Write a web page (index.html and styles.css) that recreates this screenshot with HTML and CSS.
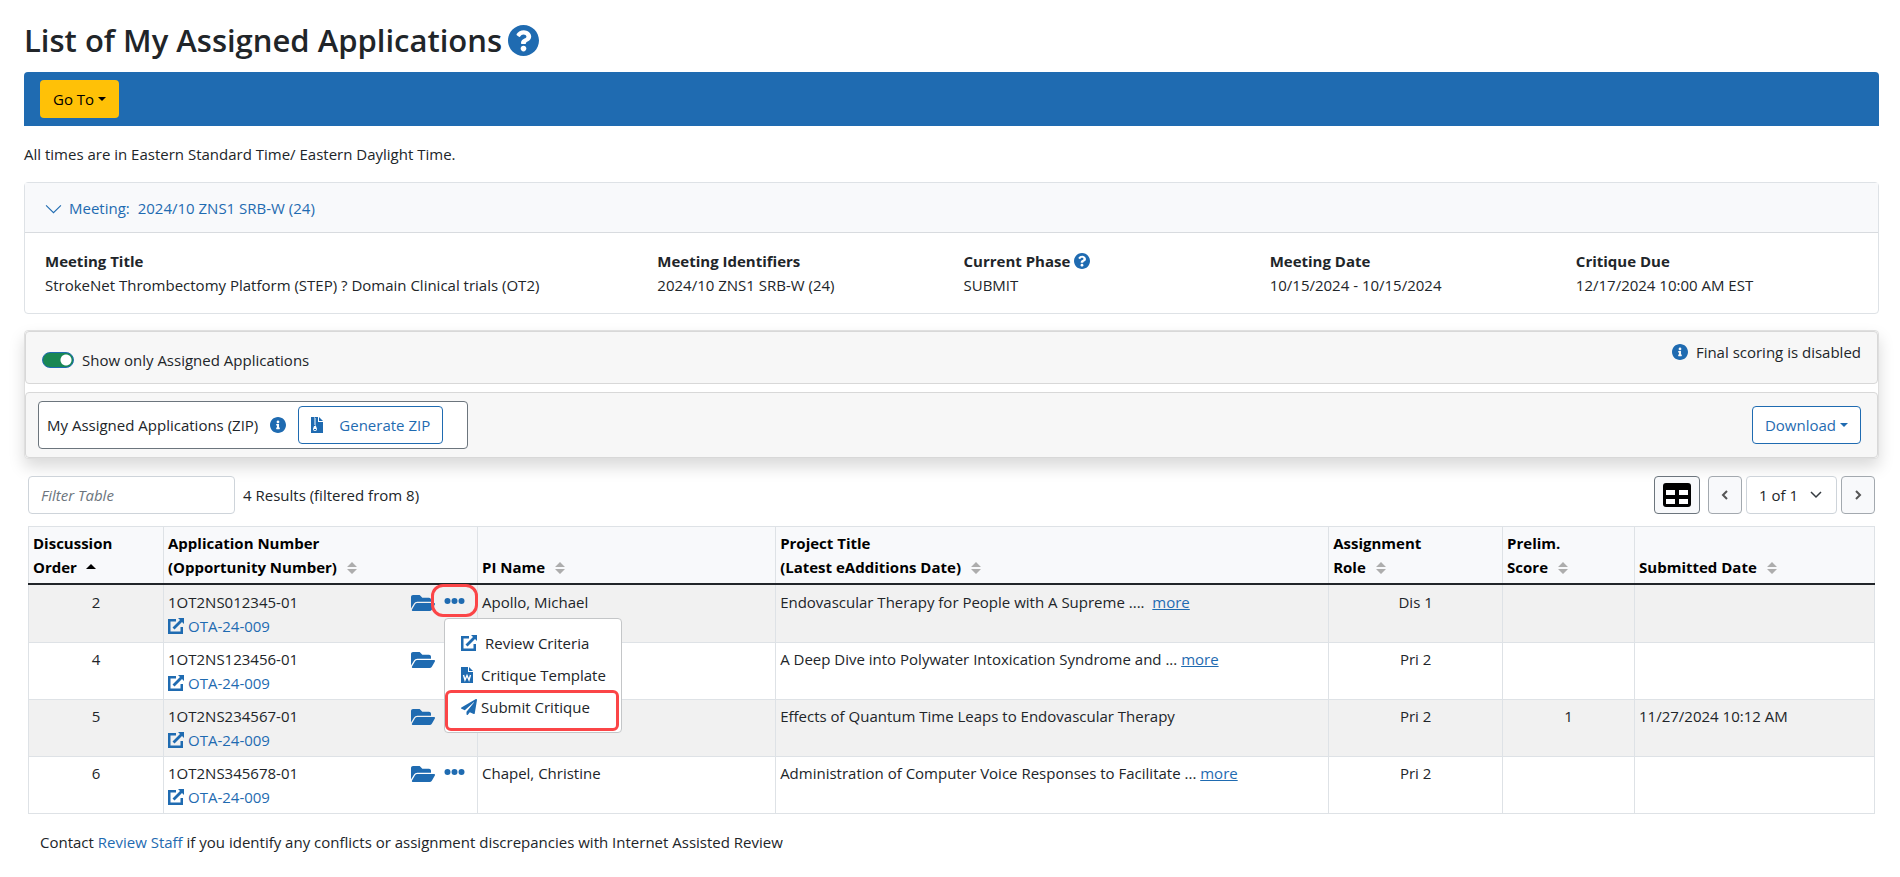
FILE: index.html
```html
<!DOCTYPE html>
<html lang="en">
<head>
    <meta charset="UTF-8">
    <meta name="viewport" content="width=device-width, initial-scale=1.0">
    <title>List of My Assigned Applications</title>
    <link rel="stylesheet" href="styles.css">
</head>
<body>
    <!-- icons shared by the page -->
    <svg class="sprite" aria-hidden="true">
        <symbol id="question" viewBox="8 8 496 496"><path d="M504 256c0 136.997-111.043 248-248 248S8 392.997 8 256C8 119.083 119.043 8 256 8s248 111.083 248 248zM262.655 90c-54.497 0-89.255 22.957-116.549 63.758-3.536 5.286-2.353 12.415 2.715 16.258l34.699 26.31c5.205 3.947 12.621 3.008 16.665-2.122 17.864-22.658 30.113-35.797 57.303-35.797 20.429 0 45.698 13.148 45.698 32.958 0 14.976-12.363 22.667-32.534 33.976C247.128 238.528 216 254.941 216 296v4c0 6.627 5.373 12 12 12h56c6.627 0 12-5.373 12-12v-1.333c0-28.462 83.186-29.647 83.186-106.667 0-58.002-60.165-102-116.531-102zM256 338c-25.365 0-46 20.635-46 46 0 25.364 20.635 46 46 46s46-20.636 46-46c0-25.365-20.635-46-46-46z"/></symbol>
        <symbol id="info" viewBox="8 8 496 496"><path d="M256 8C119.043 8 8 119.083 8 256c0 136.997 111.043 248 248 248s248-111.003 248-248C504 119.083 392.957 8 256 8zm0 110c23.196 0 42 18.804 42 42s-18.804 42-42 42-42-18.804-42-42 18.804-42 42-42zm56 254c0 6.627-5.373 12-12 12h-88c-6.627 0-12-5.373-12-12v-24c0-6.627 5.373-12 12-12h12v-64h-12c-6.627 0-12-5.373-12-12v-24c0-6.627 5.373-12 12-12h64c6.627 0 12 5.373 12 12v100h12c6.627 0 12 5.373 12 12v24z"/></symbol>
        <symbol id="folder" viewBox="0 64 576 384"><path d="M572.694 292.093L500.27 416.248A63.997 63.997 0 0 1 444.989 448H45.025c-18.523 0-30.064-20.093-20.731-36.093l72.424-124.155A64 64 0 0 1 152 256h399.964c18.523 0 30.064 20.093 20.73 36.093zM152 224h328v-48c0-26.51-21.49-48-48-48H272l-64-64H48C21.49 64 0 85.49 0 112v278.046l69.077-118.418C86.214 242.25 117.989 224 152 224z"/></symbol>
        <symbol id="plane" viewBox="0 0 512 512"><path d="M476 3.2L12.5 270.6c-18.1 10.4-15.8 35.6 2.2 43.2L121 358.4l287.3-253.2c5.5-4.9 13.3 2.6 8.6 8.3L176 407v80.5c0 23.6 28.5 32.9 42.5 15.8L282 426l124.6 52.2c14.2 6 30.4-2.9 33-18.2l72-432C515 7.8 493.3-6.8 476 3.2z"/></symbol>
        <symbol id="external" viewBox="0 0 16 16"><path d="M8 1v2.500H2.500v10h10V9H15v7H0V1zM10 0h6v6l-2-2-7.500 7.500-2-2L12 2z"/></symbol>
        <symbol id="dots" viewBox="0 0 20 6"><circle cx="3" cy="3" r="3"/><circle cx="10" cy="3" r="3"/><circle cx="17" cy="3" r="3"/></symbol>
        <symbol id="word" viewBox="0 0 12 16"><path d="M0 0h7v5h5v11H0zM8 0l4 4H8z"/><path d="M2.500 8l1.500 5 2-4.500 2 4.500 1.500-5" fill="none" stroke="#fff" stroke-width="1.400"/></symbol>
        <symbol id="zip" viewBox="0 0 12 16"><path d="M0 0h7v5h5v11H0zM8 0l4 4H8z"/><path d="M3 1h1M4 2h1M3 3h1M4 4h1M3 5h1M4 6h1M3 7h1M4 8h1" stroke="#fff" stroke-width="1"/><path d="M3 9h2l1 3a2 2 0 0 1-4 0z" fill="#fff"/><path d="M3 12h2v1H3z"/></symbol>
        <symbol id="sort" viewBox="0 0 10 12"><path d="M5 0l5 5H0zM0 7h10l-5 5z"/></symbol>
        <symbol id="left" viewBox="0 0 8 10"><path d="M6 1L2 5l4 4" fill="none" stroke="currentColor" stroke-width="2"/></symbol>
        <symbol id="right" viewBox="0 0 8 10"><path d="M2 1l4 4-4 4" fill="none" stroke="currentColor" stroke-width="2"/></symbol>
    </svg>

    <div class="page">
        <h1>List of My Assigned Applications <a href="#" aria-label="Help"><svg class="icon-lg"><use href="#question"/></svg></a></h1>
        <nav class="navbar">
            <button type="button" class="btn btn-goto">Go To<span class="caret"></span></button>
        </nav>
        <p class="note">All times are in Eastern Standard Time/ Eastern Daylight Time.</p>

        <section class="card">
            <div class="card-header">
                <a href="#"><svg class="chevron" viewBox="0 0 16 9"><path d="M1 1l7 7 7-7"/></svg>Meeting: <span>2024/10 ZNS1 SRB-W (24)</span></a>
            </div>
            <dl class="meeting">
                <div><dt>Meeting Title</dt><dd>StrokeNet Thrombectomy Platform (STEP) ? Domain Clinical trials (OT2)</dd></div>
                <div><dt>Meeting Identifiers</dt><dd>2024/10 ZNS1 SRB-W (24)</dd></div>
                <div><dt>Current Phase <a href="#" aria-label="Phase help"><svg class="icon"><use href="#question"/></svg></a></dt><dd>SUBMIT</dd></div>
                <div><dt>Meeting Date</dt><dd>10/15/2024 - 10/15/2024</dd></div>
                <div><dt>Critique Due</dt><dd>12/17/2024 10:00 AM EST</dd></div>
            </dl>
        </section>

        <section class="panel">
            <div class="panel-row panel-top">
                <label class="switch"><input type="checkbox" checked>Show only Assigned Applications</label>
                <div class="scoring"><svg class="icon"><use href="#info"/></svg>Final scoring is disabled</div>
            </div>
            <div class="panel-row panel-bottom">
                <div class="zip-box">
                    <span>My Assigned Applications (ZIP)</span>
                    <svg class="icon"><use href="#info"/></svg>
                    <button type="button" class="btn btn-outline btn-zip"><svg class="icon-file"><use href="#zip"/></svg>Generate ZIP</button>
                </div>
                <button type="button" class="btn btn-outline">Download<span class="caret"></span></button>
            </div>
        </section>

        <div class="table-area">
            <div class="table-tools">
                <input type="text" class="filter" placeholder="Filter Table" aria-label="Filter Table">
                <span>4 Results (filtered from 8)</span>
                <div class="pager">
                    <button type="button" class="btn btn-grid" aria-label="Columns"><svg viewBox="0 0 28 24"><rect width="28" height="24" rx="3"/><path d="M3 7h9v5H3zM16 7h9v5h-9zM3 16h9v5H3zM16 16h9v5h-9z" fill="#fff"/></svg></button>
                    <button type="button" class="btn btn-page" aria-label="Previous page"><svg><use href="#left"/></svg></button>
                    <div class="page-select">
                        <select aria-label="Page"><option>1 of 1</option></select>
                        <svg viewBox="0 0 12 8"><path d="M1 1l5 5 5-5"/></svg>
                    </div>
                    <button type="button" class="btn btn-page" aria-label="Next page"><svg><use href="#right"/></svg></button>
                </div>
            </div>

            <table>
                <colgroup>
                    <col class="c-order"><col class="c-app"><col class="c-pi"><col class="c-title"><col class="c-role"><col class="c-score"><col class="c-date">
                </colgroup>
                <thead>
                    <tr>
                        <th>Discussion<br>Order <span class="sorted"></span></th>
                        <th>Application Number<br>(Opportunity Number) <svg class="sort"><use href="#sort"/></svg></th>
                        <th>PI Name <svg class="sort"><use href="#sort"/></svg></th>
                        <th>Project Title<br>(Latest eAdditions Date) <svg class="sort"><use href="#sort"/></svg></th>
                        <th>Assignment<br>Role <svg class="sort"><use href="#sort"/></svg></th>
                        <th>Prelim.<br>Score <svg class="sort"><use href="#sort"/></svg></th>
                        <th>Submitted Date <svg class="sort"><use href="#sort"/></svg></th>
                    </tr>
                </thead>
                <tbody>
                    <tr>
                        <td class="center">2</td>
                        <td>
                            <div class="app">
                                <div>1OT2NS012345-01<br><a href="#"><svg class="icon"><use href="#external"/></svg>OTA-24-009</a></div>
                                <div class="actions">
                                    <a href="#" aria-label="Open folder"><svg class="folder"><use href="#folder"/></svg></a>
                                    <div class="more-wrap">
                                        <button type="button" class="more marked" aria-label="More actions"><svg><use href="#dots"/></svg></button>
                                        <div class="menu">
                                            <a href="#" class="review"><svg class="icon"><use href="#external"/></svg>Review Criteria</a>
                                            <a href="#"><svg class="icon-file"><use href="#word"/></svg>Critique Template</a>
                                            <a href="#" class="submit"><svg class="icon"><use href="#plane"/></svg>Submit Critique</a>
                                        </div>
                                    </div>
                                </div>
                            </div>
                        </td>
                        <td>Apollo, Michael</td>
                        <td>Endovascular Therapy for People with A Supreme .... &nbsp;<a href="#" class="link">more</a></td>
                        <td class="center">Dis 1</td>
                        <td></td>
                        <td></td>
                    </tr>
                    <tr>
                        <td class="center">4</td>
                        <td>
                            <div class="app">
                                <div>1OT2NS123456-01<br><a href="#"><svg class="icon"><use href="#external"/></svg>OTA-24-009</a></div>
                                <div class="actions">
                                    <a href="#" aria-label="Open folder"><svg class="folder"><use href="#folder"/></svg></a>
                                    <button type="button" class="more" aria-label="More actions"><svg><use href="#dots"/></svg></button>
                                </div>
                            </div>
                        </td>
                        <td></td>
                        <td>A Deep Dive into Polywater Intoxication Syndrome and ... <a href="#" class="link">more</a></td>
                        <td class="center">Pri 2</td>
                        <td></td>
                        <td></td>
                    </tr>
                    <tr>
                        <td class="center">5</td>
                        <td>
                            <div class="app">
                                <div>1OT2NS234567-01<br><a href="#"><svg class="icon"><use href="#external"/></svg>OTA-24-009</a></div>
                                <div class="actions">
                                    <a href="#" aria-label="Open folder"><svg class="folder"><use href="#folder"/></svg></a>
                                    <button type="button" class="more" aria-label="More actions"><svg><use href="#dots"/></svg></button>
                                </div>
                            </div>
                        </td>
                        <td></td>
                        <td>Effects of Quantum Time Leaps to Endovascular Therapy</td>
                        <td class="center">Pri 2</td>
                        <td class="center">1</td>
                        <td>11/27/2024 10:12 AM</td>
                    </tr>
                    <tr>
                        <td class="center">6</td>
                        <td>
                            <div class="app">
                                <div>1OT2NS345678-01<br><a href="#"><svg class="icon"><use href="#external"/></svg>OTA-24-009</a></div>
                                <div class="actions">
                                    <a href="#" aria-label="Open folder"><svg class="folder"><use href="#folder"/></svg></a>
                                    <button type="button" class="more" aria-label="More actions"><svg><use href="#dots"/></svg></button>
                                </div>
                            </div>
                        </td>
                        <td>Chapel, Christine</td>
                        <td>Administration of Computer Voice Responses to Facilitate ... <a href="#" class="link">more</a></td>
                        <td class="center">Pri 2</td>
                        <td></td>
                        <td></td>
                    </tr>
                </tbody>
            </table>
        </div>
        <p class="contact">Contact <a href="#">Review Staff</a> if you identify any conflicts or assignment discrepancies with Internet Assisted Review</p>
    </div>
</body>
</html>
```
FILE: styles.css
```css
*, *::before {
    margin: 0;
    padding: 0;
    box-sizing: border-box;
}
body {
    font-family: "Open Sans", "Noto Sans", sans-serif;
    font-size: 15px;
    line-height: 24px;
    color: #212529;
    background: #fff;
}
button, input, select {
    font: inherit;
    color: inherit;
}
a {
    color: #1f6bb1;
    text-decoration: none;
}
svg {
    fill: currentColor;
}
.sprite {
    display: none;
}
.page {
    padding: 20px 21px 20px 24px;
}
h1 {
    display: flex;
    align-items: center;
    gap: 6px;
    font-size: 31px;
    font-weight: 600;
    line-height: 40px;
    margin-bottom: 12px;
}
h1 a {
    display: flex;
}
.icon-lg {
    width: 31px;
    height: 31px;
}
.icon {
    width: 16px;
    height: 16px;
    color: #1f6bb1;
    vertical-align: -2px;
}
.icon-file {
    width: 12px;
    height: 16px;
    color: #1f6bb1;
}
.caret {
    display: inline-block;
    border: 4px solid transparent;
    border-top-color: currentColor;
    border-bottom: 0;
    margin-left: 4px;
    vertical-align: 4px;
}
.btn {
    height: 38px;
    border: 1px solid transparent;
    border-radius: 4px;
    padding: 0 12px;
    cursor: pointer;
}
.navbar {
    background: #1f6bb1;
    border-radius: 4px 4px 0 0;
    padding: 8px 16px;
    display: flex;
}
.btn-goto {
    background: #ffc107;
    color: #000;
}
.btn-outline {
    background: #fff;
    border-color: #1f6bb1;
    color: #1f6bb1;
}
.note {
    padding: 16px 0;
}

/* meeting card */
.card {
    border: 1px solid #dee2e6;
    border-radius: 4px;
}
.card-header {
    background: #f8f9fb;
    border-bottom: 1px solid #d8dbdf;
    padding: 13px 20px 12px;
}
.card-header span {
    margin-left: 4px;
}
.chevron {
    width: 17px;
    height: 10px;
    fill: none;
    stroke: currentColor;
    margin-right: 7px;
}
.meeting {
    display: grid;
    grid-template-columns: 4fr 2fr 2fr 2fr 2fr;
    margin-right: -4px;
    padding: 16px 0 16px 20px;
}
dt {
    font-weight: bold;
}

/* controls panel */
.panel {
    margin-top: 16px;
    border: 1px solid #dfdfdf;
    border-radius: 4px;
    background: #fff;
    box-shadow: 0 8px 16px rgba(0, 0, 0, 0.15);
}
.panel-row {
    display: flex;
    justify-content: space-between;
    background: #f7f7f7;
    border: 1px solid #d8d8d8;
    border-radius: 4px;
}
.panel-top {
    height: 53px;
    margin-bottom: 8px;
    padding: 8px 16px;
}
.panel-bottom {
    align-items: center;
    padding: 8px 16px 8px 12px;
}
.switch {
    display: flex;
    align-items: center;
    gap: 8px;
    padding-top: 4px;
}
.switch input {
    appearance: none;
    width: 32px;
    height: 16px;
    border: 1px solid #1f6bb1;
    border-radius: 8px;
    background: radial-gradient(circle at 23px 7px, #fff 5px, #198754 6px);
}
.scoring .icon {
    margin-right: 8px;
}
.zip-box {
    display: flex;
    align-items: center;
    width: 430px;
    height: 48px;
    padding: 0 8px;
    border: 1px solid #6c757d;
    border-radius: 4px;
    background: #fff;
}
.zip-box > .icon {
    margin: 0 12px;
}
.btn-zip {
    display: flex;
    align-items: center;
    gap: 16px;
}

/* applications table */
.table-area {
    padding: 17px 4px 0;
}
.table-tools {
    display: flex;
    align-items: center;
    gap: 8px;
    margin-bottom: 12px;
}
.filter {
    width: 207px;
    height: 38px;
    border: 1px solid #ced4da;
    border-radius: 4px;
    padding: 0 12px;
}
.filter::placeholder {
    color: #6c757d;
    font-style: italic;
}
.pager {
    display: flex;
    align-items: center;
    gap: 4px;
    margin-left: auto;
}
.btn-grid {
    width: 46px;
    padding: 0;
    margin-right: 4px;
    border-color: #6c757d;
    background: #f8f9fb;
    color: #000;
}
.btn-grid svg {
    display: block;
    width: 28px;
    height: 24px;
    margin: auto;
}
.btn-page {
    width: 34px;
    padding: 0;
    border-color: #a3a9af;
    background: #f8f9fb;
    color: #555;
}
.btn-page svg {
    display: block;
    width: 8px;
    height: 10px;
    margin: auto;
}
.page-select {
    position: relative;
}
.page-select select {
    appearance: none;
    width: 91px;
    height: 38px;
    border: 1px solid #ced4da;
    border-radius: 4px;
    padding: 0 12px;
    background: #fff;
}
.page-select svg {
    position: absolute;
    right: 15px;
    top: 15px;
    width: 12px;
    height: 8px;
    fill: none;
    stroke: #343a40;
    stroke-width: 1.5;
    pointer-events: none;
}
table {
    width: 100%;
    table-layout: fixed;
    border-collapse: collapse;
}
.c-order { width: 135px; }
.c-app { width: 314px; }
.c-pi { width: 16.15%; }
.c-title { width: 29.96%; }
.c-role { width: 9.42%; }
.c-score { width: 7.15%; }
th, td {
    border: 1px solid #dee2e6;
    padding: 4px;
    text-align: left;
    vertical-align: top;
}
th {
    background: #f8f9fb;
    color: #000;
    vertical-align: bottom;
    border-bottom: 2px solid #212529;
}
tbody tr:first-child td {
    padding-top: 5px;
}
tbody tr:nth-child(odd) {
    background: #f1f1f1;
}
.center {
    text-align: center;
}
.sort {
    width: 10px;
    height: 12px;
    margin-left: 6px;
    color: #adadad;
    vertical-align: -1px;
}
.sorted {
    display: inline-block;
    border: 5px solid transparent;
    border-bottom-color: #000;
    border-top: 0;
    margin-left: 5px;
    vertical-align: 4px;
}
.app {
    display: flex;
    justify-content: space-between;
}
.app .icon {
    margin-right: 4px;
}
.actions {
    display: flex;
    gap: 9px;
    padding-right: 8px;
}
.folder {
    width: 24px;
    height: 16px;
    vertical-align: -3px;
}
.more-wrap {
    position: relative;
}
.more {
    display: flex;
    align-items: center;
    height: 22px;
    border: 0;
    background: none;
    color: #1f6bb1;
    cursor: pointer;
}
.more svg {
    width: 21px;
    height: 6px;
}
.marked::before {
    content: "";
    position: absolute;
    left: -13px;
    top: -6px;
    width: 47px;
    height: 33px;
    border: 3px solid #fb4547;
    border-radius: 12px;
}
.menu {
    position: absolute;
    left: 0;
    top: 28px;
    z-index: 2;
    width: 178px;
    padding-top: 8px;
    border: 1px solid #c4c6c8;
    border-radius: 4px;
    background: #fff;
}
.menu a {
    display: flex;
    align-items: center;
    gap: 8px;
    height: 32px;
    padding-left: 16px;
    color: #212529;
    white-space: nowrap;
}
.menu .icon {
    margin-right: 0;
}
.menu .submit {
    gap: 4px;
    height: 41px;
    padding: 0 0 8px 13px;
    margin: -1px 2px 1px 0;
    border: 3px solid #fb4547;
    border-radius: 6px;
}
.link {
    text-decoration: underline;
}
.contact {
    padding: 16px 16px 0;
}
```
